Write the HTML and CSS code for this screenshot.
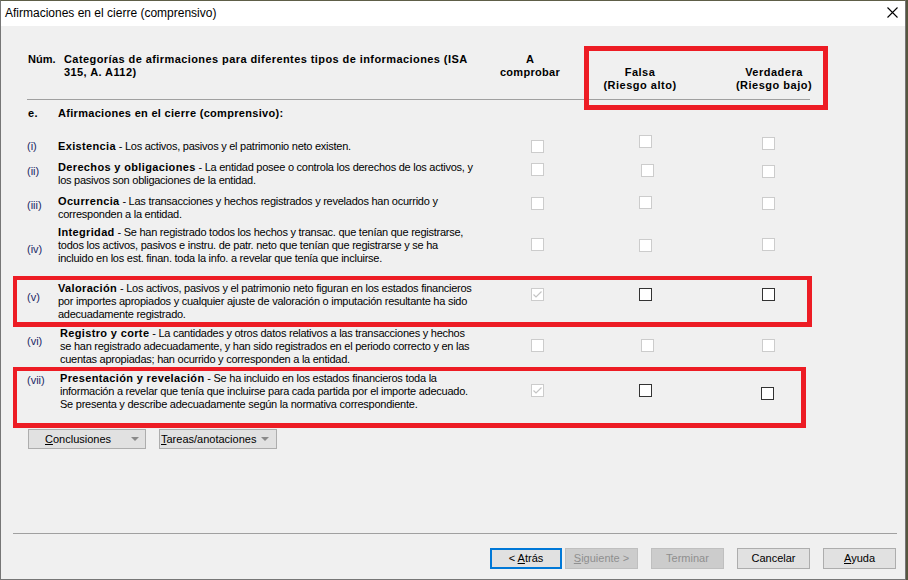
FILE: index.html
```html
<!DOCTYPE html>
<html lang="es">
<head>
<meta charset="utf-8">
<title>Afirmaciones en el cierre (comprensivo)</title>
<link rel="stylesheet" href="styles.css">
</head>
<body>
<div class="window">
  <div class="titlebar">
    <span class="title">Afirmaciones en el cierre (comprensivo)</span>
    <svg class="close" width="11" height="11" viewBox="0 0 11 11"><path d="M0.5 0.5 L10.5 10.5 M10.5 0.5 L0.5 10.5" stroke="#000" stroke-width="1.1" fill="none"/></svg>
  </div>
  <div class="content">
    <div class="header">
      <div class="h-num">Núm.</div>
      <div class="h-cat">Categorías de afirmaciones para diferentes tipos de informaciones (ISA<br>315, A. A112)</div>
      <div class="h-col">A<br>comprobar</div>
      <div class="h-col low">Falsa<br>(Riesgo alto)</div>
      <div class="h-col low">Verdadera<br>(Riesgo bajo)</div>
    </div>
    <div class="sep"></div>
    <div class="section"><span class="s-num">e.</span><span>Afirmaciones en el cierre (comprensivo):</span></div>

    <div class="rows">
      <div class="row r1">
        <div class="num">(i)</div>
        <div class="text"><b>Existencia</b> - Los activos, pasivos y el patrimonio neto existen.</div>
        <div class="cb c1"></div><div class="cb c2"></div><div class="cb c3"></div>
      </div>
      <div class="row r2">
        <div class="num">(ii)</div>
        <div class="text"><b>Derechos y obligaciones</b> - La entidad posee o controla los derechos de los activos, y<br>los pasivos son obligaciones de la entidad.</div>
        <div class="cb c1"></div><div class="cb c2 shift"></div><div class="cb c3"></div>
      </div>
      <div class="row r3">
        <div class="num">(iii)</div>
        <div class="text"><b>Ocurrencia</b> - Las transacciones y hechos registrados y revelados han ocurrido y<br>corresponden a la entidad.</div>
        <div class="cb c1"></div><div class="cb c2"></div><div class="cb c3"></div>
      </div>
      <div class="row r4">
        <div class="num">(iv)</div>
        <div class="text"><b>Integridad</b> - Se han registrado todos los hechos y transac. que tenían que registrarse,<br>todos los activos, pasivos e instru. de patr. neto que tenían que registrarse y se ha<br>incluido en los est. finan. toda la info. a revelar que tenía que incluirse.</div>
        <div class="cb c1"></div><div class="cb c2"></div><div class="cb c3"></div>
      </div>
      <div class="row r5">
        <div class="num">(v)</div>
        <div class="text"><b>Valoración</b> - Los activos, pasivos y el patrimonio neto figuran en los estados financieros<br>por importes apropiados y cualquier ajuste de valoración o imputación resultante ha sido<br>adecuadamente registrado.</div>
        <div class="cb c1 checked"><svg width="11" height="11" viewBox="0 0 11 11"><path d="M1.5 5.5 L4 8 L9.5 2.5" stroke="#c4c4c4" stroke-width="1.2" fill="none"/></svg></div>
        <div class="cb c2 on"></div><div class="cb c3 on"></div>
      </div>
      <div class="row r6">
        <div class="num">(vi)</div>
        <div class="text indent"><b>Registro y corte</b> - La cantidades y otros datos relativos a las transacciones y hechos<br>se han registrado adecuadamente, y han sido registrados en el periodo correcto y en las<br>cuentas apropiadas; han ocurrido y corresponden a la entidad.</div>
        <div class="cb c1"></div><div class="cb c2 shift"></div><div class="cb c3"></div>
      </div>
      <div class="row r7">
        <div class="num">(vii)</div>
        <div class="text indent"><b>Presentación y revelación</b> - Se ha incluido en los estados financieros toda la<br>información a revelar que tenía que incluirse para cada partida por el importe adecuado.<br>Se presenta y describe adecuadamente según la normativa correspondiente.</div>
        <div class="cb c1 checked"><svg width="11" height="11" viewBox="0 0 11 11"><path d="M1.5 5.5 L4 8 L9.5 2.5" stroke="#c4c4c4" stroke-width="1.2" fill="none"/></svg></div>
        <div class="cb c2 on"></div><div class="cb c3 on back"></div>
      </div>
    </div>

    <div class="tools">
      <div class="dd dd-concl"><span><u>C</u>onclusiones</span><span class="arrow"></span></div>
      <div class="dd dd-tareas"><span><u>T</u>areas/anotaciones</span><span class="arrow"></span></div>
    </div>

    <div class="footer-sep"></div>
    <div class="footer">
      <div class="btn default"><span>&lt; <u>A</u>trás</span></div>
      <div class="btn disabled"><span><u>S</u>iguiente &gt;</span></div>
      <div class="btn disabled gap"><span>Terminar</span></div>
      <div class="btn gap"><span>Cancelar</span></div>
      <div class="btn gap"><span><u>A</u>yuda</span></div>
    </div>
  </div>
</div>

<div class="mark mark-head"></div>
<div class="mark mark-v"></div>
<div class="mark mark-vii"></div>
</body>
</html>
```

FILE: styles.css
```css
html, body {
  margin: 0;
  padding: 0;
}
body {
  position: relative;
  width: 908px;
  height: 580px;
  overflow: hidden;
  background: #56563f;
  font-family: "Liberation Sans", Arial, sans-serif;
  font-size: 11px;
  color: #000;
}
.window {
  box-sizing: border-box;
  width: 906px;
  height: 580px;
  border: 1px solid #767676;
  border-top-color: #5e5e48;
  background: #f0f0f0;
  display: flex;
  flex-direction: column;
}
.titlebar {
  height: 25px;
  flex: none;
  background: #fff;
  display: flex;
  align-items: center;
  justify-content: space-between;
  padding: 0 7px 0 4px;
}
.title {
  font-size: 12px;
  line-height: 25px;
  padding-bottom: 1px;
}
.close {
  display: block;
  margin-top: -2px;
}
.content {
  flex: 1;
  display: flex;
  flex-direction: column;
  padding-left: 26px;
  line-height: 13px;
}
.header {
  margin-top: 27px;
  padding-left: 1px;
  display: grid;
  grid-template-columns: 36px 406px 120px 100px 168px;
  font-weight: bold;
}
.h-cat {
  letter-spacing: 0.42px;
}
.h-col {
  text-align: center;
  letter-spacing: 0.3px;
}
.h-col.low {
  margin-top: 13px;
  letter-spacing: 0.5px;
}
.sep {
  margin-top: 7px;
  height: 1px;
  width: 783px;
  background: #a0a0a0;
}
.section {
  margin-top: 7px;
  padding-left: 1px;
  display: flex;
  font-weight: bold;
  letter-spacing: 0.3px;
}
.s-num {
  width: 30px;
}
.rows {
  margin-top: 20px;
}
.row {
  display: grid;
  grid-template-columns: 31px 473px 108px 123px 13px;
  align-items: start;
}
.num {
  color: #1c2866;
  padding-top: var(--n);
}
.text {
  letter-spacing: -0.25px;
}
.text b {
  letter-spacing: 0.35px;
}
.text.indent {
  padding-left: 2px;
}
.cb {
  box-sizing: border-box;
  width: 13px;
  height: 13px;
  border: 1px solid #cccccc;
  background: #fff;
}
.cb svg {
  display: block;
}
.cb.on {
  border-color: #333;
}
.c1 { margin-top: var(--c1); }
.c2 { margin-top: var(--c2); }
.c3 { margin-top: var(--c3); }
.cb.shift { margin-left: 2px; }
.cb.back { margin-left: -1px; }

.r1 { height: 21px; --n: 0px;  --c1: 0px;  --c2: -5px; --c3: -3px; }
.r2 { height: 34px; --n: 4px;  --c1: 2px;  --c2: 3px;  --c3: 4px; }
.r3 { height: 31px; --n: 4px;  --c1: 2px;  --c2: 1px;  --c3: 2px; }
.r4 { height: 56px; --n: 17px; --c1: 12px; --c2: 13px; --c3: 12px; }
.r5 { height: 45px; --n: 9px;  --c1: 6px;  --c2: 6px;  --c3: 6px; }
.r6 { height: 45px; --n: 8px;  --c1: 12px; --c2: 12px; --c3: 12px; }
.r7 { height: 57px; --n: 2px;  --c1: 12px; --c2: 12px; --c3: 15px; }

.tools {
  display: flex;
  gap: 13px;
  padding-left: 1px;
}
.dd {
  box-sizing: border-box;
  width: 118px;
  height: 20px;
  border: 1px solid #adadad;
  background: #e1e1e1;
  display: flex;
  align-items: center;
  justify-content: space-between;
}
.dd-concl {
  padding: 0 6px 0 16px;
}
.dd-tareas {
  padding: 0 7px 0 1px;
}
.arrow {
  width: 0;
  height: 0;
  border-left: 4px solid transparent;
  border-right: 4px solid transparent;
  border-top: 4px solid #8a8a8a;
}
.footer-sep {
  margin-top: auto;
  margin-left: -14px;
  width: 884px;
  height: 1px;
  background: #a0a0a0;
}
.footer {
  display: flex;
  justify-content: flex-end;
  padding: 14px 9px 10px 0;
}
.btn {
  box-sizing: border-box;
  width: 73px;
  height: 21px;
  border: 1px solid #adadad;
  background: #e1e1e1;
  display: flex;
  align-items: center;
  justify-content: center;
  margin-left: 3px;
}
.btn.gap {
  margin-left: 13px;
}
.btn.default {
  width: 72px;
  border: 2px solid #0078d7;
}
.btn.disabled {
  background: #cccccc;
  border-color: #bfbfbf;
  color: #8f8f8f;
}
.mark {
  position: absolute;
  box-sizing: border-box;
  border: solid #ed1c24;
}
.mark-head {
  left: 584px;
  top: 46px;
  width: 244px;
  height: 64px;
  border-width: 5px;
}
.mark-v {
  left: 13px;
  top: 276px;
  width: 799px;
  height: 51px;
  border-width: 4px 5px 5px 4px;
}
.mark-vii {
  left: 13px;
  top: 367px;
  width: 793px;
  height: 61px;
  border-width: 4px 5px 5px 4px;
}
```
